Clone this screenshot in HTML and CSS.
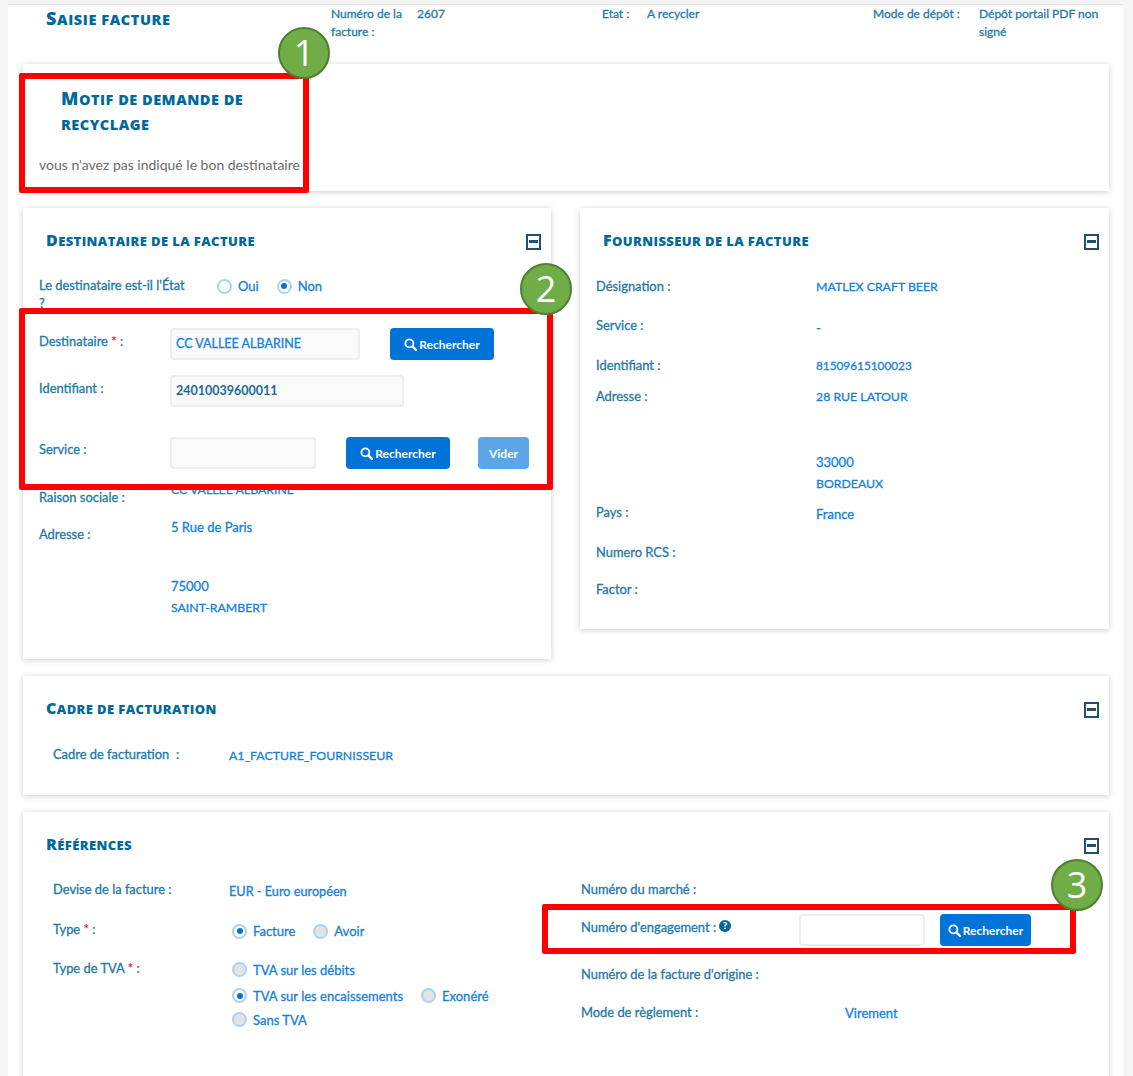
FILE: index.html
```html
<!DOCTYPE html>
<html lang="fr">
<head>
<meta charset="utf-8">
<title>Saisie facture</title>
<link rel="stylesheet" href="styles.css">
</head>
<body>
<svg class="defs" width="0" height="0" aria-hidden="true"><defs>
<symbol id="loupe" viewBox="0 0 14 14"><circle cx="5.8" cy="5.8" r="4.3" fill="none" stroke="currentColor" stroke-width="2"/><path d="M9 9l4 4" stroke="currentColor" stroke-width="2.4" stroke-linecap="round"/></symbol>
</defs></svg>
<div class="sheet">
  <header class="head">
    <h1 class="title head-title">Saisie facture</h1>
    <div class="label">Numéro de la facture :</div>
    <div class="label">2607</div>
    <div class="label">Etat :</div>
    <div class="label">A recycler</div>
    <div class="label">Mode de dépôt :</div>
    <div class="label">Dépôt portail PDF non signé</div>
  </header>

  <section class="card motif">
    <h2 class="title motif-title">Motif de demande de recyclage</h2>
    <p class="motif-text">vous n'avez pas indiqué le bon destinataire</p>
  </section>

  <div class="duo">
    <section class="card dest">
      <div class="card-head"><h2 class="title">Destinataire de la facture</h2><span class="minus"></span></div>
      <div class="row r-etat">
        <div class="label l-etat">Le destinataire est-il l'État ?</div>
        <div class="radios etat-radios">
          <span class="radio white"></span><span class="value rlabel">Oui</span>
          <span class="radio on"></span><span class="value">Non</span>
        </div>
      </div>
      <div class="row r-dest">
        <div class="label lw pad4">Destinataire <b class="req">*</b> :</div>
        <div class="input i-dest value">CC VALLEE ALBARINE</div>
        <button class="btn b-dest"><svg class="ico"><use href="#loupe"/></svg>Rechercher</button>
      </div>
      <div class="row r-id">
        <div class="label lw pad4">Identifiant :</div>
        <div class="input i-id dark">24010039600011</div>
      </div>
      <div class="row r-serv">
        <div class="label lw pad3">Service :</div>
        <div class="input i-serv"></div>
        <button class="btn b-serv"><svg class="ico"><use href="#loupe"/></svg>Rechercher</button>
        <button class="btn vider">Vider</button>
      </div>
      <div class="row r-rs">
        <div class="label lw pad7">Raison sociale :</div>
        <div class="value caps nudge">CC VALLEE ALBARINE</div>
      </div>
      <div class="row r-adr">
        <div class="label lw pad7">Adresse :</div>
        <div class="value nudge">
          <div>5 Rue de Paris</div>
          <div class="city">75000</div>
          <div class="line22 caps">SAINT-RAMBERT</div>
        </div>
      </div>
    </section>

    <section class="card four">
      <div class="card-head"><h2 class="title">Fournisseur de la facture</h2><span class="minus"></span></div>
      <div class="row f1"><div class="label lf">Désignation :</div><div class="value caps pad1">MATLEX CRAFT BEER</div></div>
      <div class="row f2"><div class="label lf">Service :</div><div class="value pad3">-</div></div>
      <div class="row f3"><div class="label lf">Identifiant :</div><div class="value num pad1">81509615100023</div></div>
      <div class="row f4"><div class="label lf">Adresse :</div>
        <div class="value pad1"><div class="caps">28 RUE LATOUR</div><div class="city city-four">33000</div><div class="line22 caps">BORDEAUX</div></div></div>
      <div class="row f5"><div class="label lf">Pays :</div><div class="value pad2">France</div></div>
      <div class="row f6"><div class="label lf">Numero RCS :</div></div>
      <div class="row f7"><div class="label lf">Factor :</div></div>
    </section>
  </div>

  <section class="card cadre">
    <div class="card-head"><h2 class="title">Cadre de facturation</h2><span class="minus"></span></div>
    <div class="row c1"><div class="label lc">Cadre de facturation &nbsp;:</div><div class="value caps pad2">A1_FACTURE_FOURNISSEUR</div></div>
  </section>

  <section class="card refs">
    <div class="card-head"><h2 class="title">Références</h2><span class="minus"></span></div>
    <div class="refs-body">
      <div class="refs-left">
        <div class="row g1"><div class="label lc">Devise de la facture :</div><div class="value pad2 eur">EUR - Euro européen</div></div>
        <div class="row g2"><div class="label lc">Type <b class="req">*</b> :</div>
          <div class="radios pad2 shift"><span class="radio on"></span><span class="value rlabel">Facture</span><span class="radio off"></span><span class="value">Avoir</span></div></div>
        <div class="row g3"><div class="label lc">Type de TVA <b class="req">*</b> :</div>
          <div class="tva shift">
            <div class="radios"><span class="radio off"></span><span class="value">TVA sur les débits</span></div>
            <div class="radios"><span class="radio on"></span><span class="value rlabel">TVA sur les encaissements</span><span class="radio off"></span><span class="value">Exonéré</span></div>
            <div class="radios"><span class="radio off"></span><span class="value">Sans TVA</span></div>
          </div></div>
      </div>
      <div class="refs-right">
        <div class="row h1"><div class="label">Numéro du marché :</div></div>
        <div class="row h2">
          <div class="label lh pad4">Numéro d'engagement :
            <svg class="help" viewBox="0 0 12 12"><circle cx="6" cy="6" r="6"/><text x="6" y="9.4" text-anchor="middle">?</text></svg></div>
          <div class="input i-eng"></div>
          <button class="btn b-eng"><svg class="ico"><use href="#loupe"/></svg>Rechercher</button>
        </div>
        <div class="row h3"><div class="label">Numéro de la facture d'origine :</div></div>
        <div class="row h4"><div class="label lm">Mode de règlement :</div><div class="value pad1">Virement</div></div>
      </div>
    </div>
  </section>
</div>

<div class="mark m1"></div>
<div class="mark m2"></div>
<div class="mark m3"></div>
<div class="badge b1">1</div>
<div class="badge b2">2</div>
<div class="badge b3">3</div>
</body>
</html>
```
FILE: styles.css
```css
* { box-sizing: border-box; }
html, body { margin: 0; height: 1076px; overflow: hidden; }
body { background: #f5f5f5; font-family: Lato, "Open Sans", sans-serif; font-size: 12px; position: relative; }
.defs { position: absolute; }
.sheet { margin: 4px 10px 0 8px; height: 1072px; overflow: hidden; background: #fff; border-top: 1px solid #e2e2e2; padding: 0 14px 0 15px; }

.title { margin: 0; color: #00689c; font-family: "Open Sans", Lato, sans-serif; font-size: 13px; line-height: 22px; font-weight: 800; letter-spacing: .4px; text-transform: uppercase; }
.title::first-letter { font-size: 16px; }
.label { color: #2378a6; font-size: 12.9px; line-height: 18px; font-weight: 400; -webkit-text-stroke: .3px #2378a6; }
.value { color: #1580dc; font-size: 13px; line-height: 18px; font-weight: 400; -webkit-text-stroke: .3px #1580dc; }
.caps { font-size: 12.3px; }
.num { font-size: 11.8px; }
.eur { font-size: 12.7px; }
.nudge { margin-left: 1px; }
.req { color: #e4262c; -webkit-text-stroke: 0; }

.head { display: grid; grid-template-columns: 308px 86px 185px 45px 226px 106px 130px; height: 59px; padding-top: 0; }
.head .label { font-size: 12px; }
.head-title { padding-left: 23px; font-size: 14.5px; line-height: 26px; letter-spacing: .6px; }
.head-title::first-letter { font-size: 18px; }

.card { background: #fff; box-shadow: 0 1px 6px rgba(0,0,0,.2); margin-bottom: 17px; padding-left: 16px; }
.motif { height: 127px; padding-top: 22px; }
.motif-title { width: 215px; margin-left: 22px; font-size: 14.5px; line-height: 25px; letter-spacing: .5px; }
.motif-title::first-letter { font-size: 18px; }
.motif-text { margin: 19px 0 0; color: #6a6a6a; font-size: 14px; line-height: 18px; }

.duo { display: flex; align-items: flex-start; gap: 29px; }
.dest { width: 528px; height: 451px; }
.four { width: 529px; height: 421px; }
.cadre { height: 119px; }
.refs { height: 400px; }

.card-head { display: flex; justify-content: space-between; align-items: center; height: 22px; padding: 21px 10px 0 7px; box-sizing: content-box; }
.minus { width: 15px; height: 16px; border: 2px solid #204f72; position: relative; flex: none; margin-top: 3px; }
.minus::after { content: ""; position: absolute; left: 1px; right: 1px; top: 4px; height: 3px; background: #204f72; }

.row { display: flex; align-items: flex-start; }
.pad1 { padding-top: 1px; }
.pad2 { padding-top: 2px; }
.pad3 { padding-top: 3px; }
.pad4 { padding-top: 4px; }
.pad7 { padding-top: 7px; }

.r-etat { height: 52px; margin-top: 25px; }
.l-etat { width: 148px; flex: none; }
.etat-radios { margin: 1px 0 0 30px; }
.r-dest { height: 47px; }
.r-id { height: 62px; }
.r-serv { height: 44px; }
.r-rs { height: 37px; }
.lw { width: 131px; flex: none; }
.city { margin-top: 39px; line-height: 22px; }
.city-four { margin-top: 45px; }
.line22 { line-height: 22px; }

.input { height: 32px; border: 2px solid #ededed; border-radius: 4px; background: #fafafa; padding: 0 4px; line-height: 27px; font-size: 12.5px; }
.dark { color: #1c6a98; font-weight: 700; }
.i-dest { width: 190px; }
.i-id { width: 234px; }
.i-serv { width: 146px; }
.i-eng { width: 126px; background: #fff; }

.btn { display: inline-flex; align-items: center; justify-content: center; height: 32px; border: 0; border-radius: 4px; background: #0073d9; color: #fff; font: 700 12px Lato, sans-serif; padding: 0; }
.ico { width: 13px; height: 13px; margin-right: 2px; color: #fff; }
.b-dest { width: 104px; margin-left: 30px; }
.b-serv { width: 104px; margin-left: 30px; }
.vider { width: 51px; margin-left: 28px; background: #5ca6e8; }
.b-eng { width: 91px; margin-left: 15px; }

.radios { display: flex; align-items: center; flex-wrap: wrap; }
.radio { width: 15px; height: 15px; border-radius: 50%; border: 2px solid #a8d2f6; margin-right: 6px; flex: none; position: relative; background: #fff; }
.radio.off { background: #e3e3e3; }
.radio.on::after { content: ""; position: absolute; left: 2.5px; top: 2.5px; width: 6px; height: 6px; border-radius: 50%; background: #0073d9; }
.rlabel { margin-right: 18px; }
.shift { margin-left: 3px; }

.lf { width: 220px; flex: none; }
.f1 { height: 39px; margin-top: 26px; }
.f2 { height: 40px; }
.f3 { height: 31px; }
.f4 { height: 116px; }
.f5 { height: 40px; }
.f6 { height: 37px; }

.lc { width: 176px; flex: none; margin-left: 14px; }
.c1 { margin-top: 26px; }

.refs-body { display: flex; margin-top: 25px; }
.refs-left { width: 542px; flex: none; }
.refs-right { flex: 1; }
.g1 { height: 40px; }
.g2 { height: 39px; }
.g3 { height: 80px; }
.tva { margin-top: -2px; }
.tva .radios { height: 25px; }
.tva .radios:first-child { margin-bottom: 1px; }
.tva .radios:last-child { margin-top: -1px; }
.h1 { height: 34px; }
.h2 { height: 51px; }
.h3 { height: 38px; }
.lh { width: 218px; flex: none; white-space: nowrap; }
.lm { width: 264px; flex: none; }
.help { width: 12px; height: 12px; fill: #00689c; vertical-align: 0; -webkit-text-stroke: 0; }
.help text { fill: #fff; font: 900 10px Lato, sans-serif; }

.mark { position: absolute; border: 6px solid #ff0000; border-radius: 2px; }
.m1 { left: 19px; top: 73px; width: 290px; height: 120px; }
.m2 { left: 19px; top: 308px; width: 534px; height: 182px; }
.m3 { left: 542px; top: 904px; width: 534px; height: 50px; }

.badge { position: absolute; width: 52px; height: 52px; border-radius: 50%; background: #70ad47; border: 2px solid #507e32; color: #fff; font: 36px/48px "Open Sans", sans-serif; text-align: center; }
.b1 { left: 278px; top: 27px; }
.b2 { left: 520px; top: 263px; }
.b3 { left: 1051px; top: 859px; }
```
